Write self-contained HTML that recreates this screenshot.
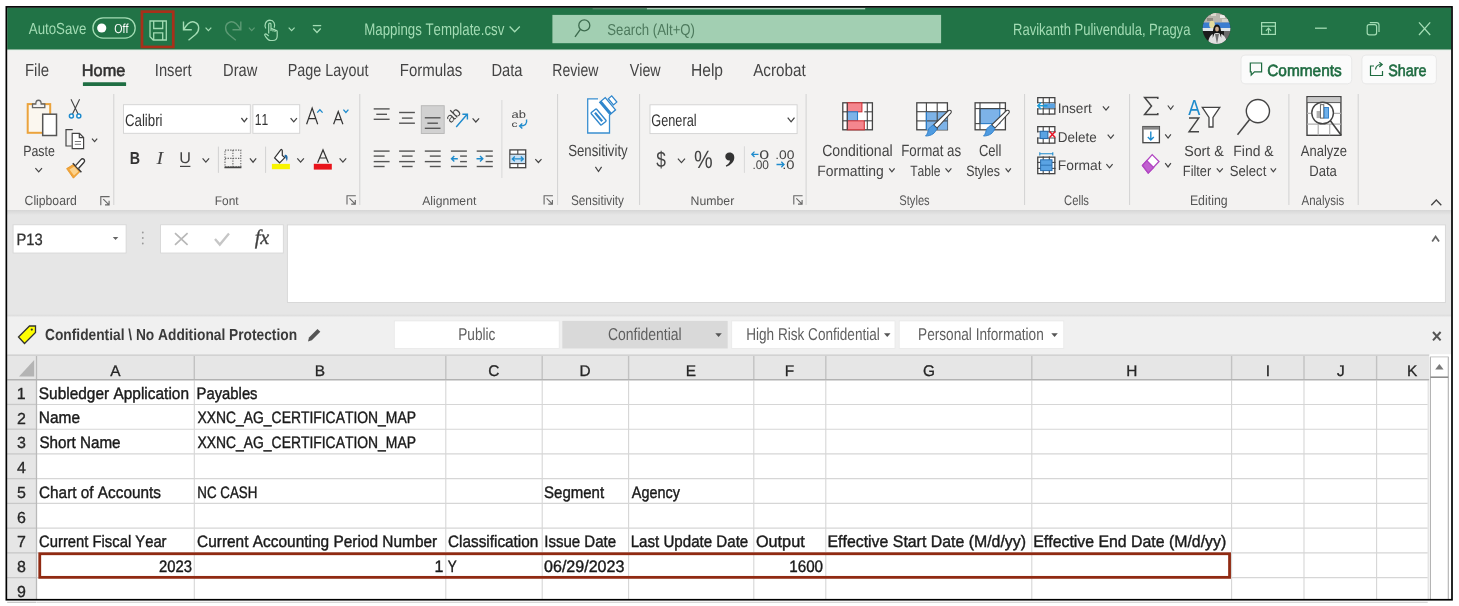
<!DOCTYPE html>
<html><head><meta charset="utf-8"><title>Excel</title>
<style>
*{margin:0;padding:0}
html,body{width:1459px;height:606px;overflow:hidden;background:#fff}
svg{position:absolute;left:0;top:0;display:block;will-change:transform}
text{font-kerning:none;white-space:pre;text-rendering:geometricPrecision}
</style></head><body>
<svg width="1459" height="606" viewBox="0 0 1459 606">
<rect x="7.20" y="7.70" width="1444.10" height="42.10" fill="#217346"/>
<rect x="7.20" y="49.80" width="1444.10" height="160.20" fill="#f3f2f1"/>
<rect x="7.20" y="49.80" width="1444.10" height="0.80" fill="#e3efe7"/>
<rect x="7.20" y="210.00" width="1444.10" height="105.00" fill="#e6e6e6"/>
<defs><linearGradient id="sh" x1="0" y1="0" x2="0" y2="1"><stop offset="0" stop-color="#d6d6d6"/><stop offset="1" stop-color="#e6e6e6"/></linearGradient><linearGradient id="sh2" x1="0" y1="0" x2="0" y2="1"><stop offset="0" stop-color="#d8d8d8"/><stop offset="1" stop-color="#efefef"/></linearGradient></defs>
<rect x="7.20" y="210.00" width="1444.10" height="5.00" fill="url(#sh)"/>
<rect x="7.20" y="317.00" width="1444.10" height="37.20" fill="#f0f0f0"/>
<rect x="7.20" y="314.80" width="1444.10" height="2.40" fill="url(#sh2)"/>
<rect x="592.60" y="8.20" width="54.30" height="1.10" fill="#5f8f73"/>
<rect x="646.90" y="8.20" width="218.30" height="1.10" fill="#d2eadb"/>
<text x="28.77" y="34.10" font-size="15.99" fill="#a3dcb4" textLength="57.62" lengthAdjust="spacingAndGlyphs" font-family='"Liberation Sans",sans-serif'>AutoSave</text>
<rect x="92.9" y="17.8" width="42.3" height="20.3" rx="10.15" fill="none" stroke="#a3dcb4" stroke-width="1.3"/>
<circle cx="101.7" cy="28" r="4.6" fill="#ffffff"/>
<text x="114.30" y="32.60" font-size="13.08" fill="#ffffff" textLength="14.19" lengthAdjust="spacingAndGlyphs" font-family='"Liberation Sans",sans-serif'>Off</text>
<rect x="141.95" y="11.65" width="31.3" height="35.3" fill="none" stroke="#a8301a" stroke-width="2.7"/>
<path d="M150 21 H166.3 V40 H153.2 L150 36.8 Z M153.7 21 V28.5 H162.7 V21 M153.7 40 V32.8 H162.7 V40" stroke="#a3dcb4" fill="none" stroke-width="1.3"/>
<path d="M183.5 21.5 V29.8 H191.8 M183.8 29.6 C187 24 190.5 21 194 22 C200.5 24 199.5 31 195.5 34.5 L188.5 40.2" stroke="#a3dcb4" fill="none" stroke-width="1.4"/>
<path d="M205.6 27.6 L208.4 30.6 L211.3 27.6" stroke="#a3dcb4" fill="none" stroke-width="1.2"/>
<path d="M240.8 21.5 V29.8 H232.5 M240.5 29.6 C237.3 24 233.8 21 230.3 22 C223.8 24 224.8 31 228.8 34.5 L235.8 40.2" stroke="#5c9a74" fill="none" stroke-width="1.4"/>
<path d="M248.9 27.6 L251.7 30.6 L254.6 27.6" stroke="#5c9a74" fill="none" stroke-width="1.2"/>
<path d="M268.7 33.5 V24.2 C268.7 22.8 271 22.8 271 24.2 V31 M271 29.5 C271 28.3 273 28.3 273 29.5 V31.5 M273 30 C273 29 275 29 275 30 V32 M275 31 C275 30 277.2 30 277.2 31.5 V36 C277.2 39 275.5 40.5 272.8 40.5 H270.5 C268.7 40.5 267.2 38.8 265.8 36.8 L264.8 35.3 C264.3 34.3 265.8 33.5 266.6 34.3 L268.7 36" stroke="#a3dcb4" fill="none" stroke-width="1.2"/>
<path d="M265.8 28.5 C264 25.5 265.5 20.3 269.8 20.2 C274 20.3 275.5 24.5 274.2 27.8" stroke="#a3dcb4" fill="none" stroke-width="1.2"/>
<path d="M288.7 27.6 L291.6 30.6 L294.6 27.6" stroke="#a3dcb4" fill="none" stroke-width="1.2"/>
<line x1="312.80" y1="25.60" x2="321.20" y2="25.60" stroke="#a3dcb4" stroke-width="1.3"/>
<path d="M313.3 28.5 L317 32.5 L320.7 28.5" stroke="#a3dcb4" fill="none" stroke-width="1.3"/>
<text x="364.31" y="35.10" font-size="16.86" fill="#a3dcb4" textLength="140.03" lengthAdjust="spacingAndGlyphs" font-family='"Liberation Sans",sans-serif'>Mappings Template.csv</text>
<path d="M509.6 26.5 L514.7 31.8 L519.8 26.5" stroke="#a3dcb4" fill="none" stroke-width="1.3"/>
<rect x="552.40" y="14.90" width="388.70" height="28.30" fill="#a2cfb2"/>
<circle cx="584.3" cy="25.4" r="5.5" fill="none" stroke="#3d6b4e" stroke-width="1.3"/>
<line x1="580.40" y1="29.30" x2="575.00" y2="36.80" stroke="#3d6b4e" stroke-width="1.4"/>
<text x="607.30" y="35.10" font-size="15.84" fill="#4d7a5d" textLength="87.72" lengthAdjust="spacingAndGlyphs" font-family='"Liberation Sans",sans-serif'>Search (Alt+Q)</text>
<text x="1013.03" y="34.80" font-size="16.42" fill="#a3dcb4" textLength="177.37" lengthAdjust="spacingAndGlyphs" font-family='"Liberation Sans",sans-serif'>Ravikanth Pulivendula, Pragya</text>
<rect x="1261.6" y="22.6" width="13.8" height="11.8" fill="none" stroke="#a3dcb4" stroke-width="1.2"/>
<line x1="1261.60" y1="26.20" x2="1275.40" y2="26.20" stroke="#a3dcb4" stroke-width="1.2"/>
<path d="M1268.5 33.8 V28.5 M1265.9 30.8 L1268.5 28.2 L1271.1 30.8" stroke="#a3dcb4" fill="none" stroke-width="1.2"/>
<line x1="1315.00" y1="28.20" x2="1326.80" y2="28.20" stroke="#a3dcb4" stroke-width="1.3"/>
<rect x="1367.2" y="24.6" width="9.4" height="10.2" rx="2" fill="none" stroke="#a3dcb4" stroke-width="1.2"/>
<path d="M1369.8 22.6 H1376.5 C1378 22.6 1379 23.6 1379 25 V32" stroke="#a3dcb4" fill="none" stroke-width="1.2"/>
<path d="M1419 22.4 L1430.2 35 M1430.2 22.4 L1419 35" stroke="#a3dcb4" fill="none" stroke-width="1.3"/>
<text x="24.97" y="76.40" font-size="17.59" fill="#444444" textLength="24.09" lengthAdjust="spacingAndGlyphs" font-family='"Liberation Sans",sans-serif'>File</text>
<text x="81.86" y="76.10" font-size="16.72" fill="#303030" textLength="43.46" lengthAdjust="spacingAndGlyphs" font-family='"Liberation Sans",sans-serif' stroke="#303030" stroke-width="0.55">Home</text>
<rect x="82.90" y="82.20" width="43.20" height="3.90" fill="#1f6e43" rx="0.6"/>
<text x="154.84" y="76.40" font-size="17.59" fill="#444444" textLength="36.76" lengthAdjust="spacingAndGlyphs" font-family='"Liberation Sans",sans-serif'>Insert</text>
<text x="223.10" y="76.40" font-size="17.59" fill="#444444" textLength="34.27" lengthAdjust="spacingAndGlyphs" font-family='"Liberation Sans",sans-serif'>Draw</text>
<text x="287.72" y="76.40" font-size="17.59" fill="#444444" textLength="80.79" lengthAdjust="spacingAndGlyphs" font-family='"Liberation Sans",sans-serif'>Page Layout</text>
<text x="399.77" y="76.40" font-size="17.59" fill="#444444" textLength="62.47" lengthAdjust="spacingAndGlyphs" font-family='"Liberation Sans",sans-serif'>Formulas</text>
<text x="491.39" y="76.40" font-size="17.59" fill="#444444" textLength="31.11" lengthAdjust="spacingAndGlyphs" font-family='"Liberation Sans",sans-serif'>Data</text>
<text x="552.25" y="76.40" font-size="17.59" fill="#444444" textLength="46.12" lengthAdjust="spacingAndGlyphs" font-family='"Liberation Sans",sans-serif'>Review</text>
<text x="629.74" y="76.40" font-size="17.59" fill="#444444" textLength="30.93" lengthAdjust="spacingAndGlyphs" font-family='"Liberation Sans",sans-serif'>View</text>
<text x="690.92" y="76.40" font-size="17.59" fill="#444444" textLength="32.14" lengthAdjust="spacingAndGlyphs" font-family='"Liberation Sans",sans-serif'>Help</text>
<text x="753.17" y="76.40" font-size="17.59" fill="#444444" textLength="52.64" lengthAdjust="spacingAndGlyphs" font-family='"Liberation Sans",sans-serif'>Acrobat</text>
<rect x="1241" y="55.1" width="110.7" height="28.7" rx="4" fill="#fbfbfb" stroke="#e4e4e4" stroke-width="0.8"/>
<rect x="1361.9" y="55.1" width="74.5" height="28.7" rx="4" fill="#fbfbfb" stroke="#e4e4e4" stroke-width="0.8"/>
<path d="M1250.3 63 H1261.6 V71.8 H1254.5 L1251.2 75 V71.8 H1250.3 Z" stroke="#1e6b40" fill="none" stroke-width="1.2"/>
<text x="1267.22" y="76.00" font-size="16.28" fill="#1e6b40" textLength="74.54" lengthAdjust="spacingAndGlyphs" font-family='"Liberation Sans",sans-serif' stroke="#1e6b40" stroke-width="0.6">Comments</text>
<path d="M1375.5 69.5 C1376 65.5 1378.5 64.5 1381.5 64.5 M1379.3 62.2 L1382.2 64.5 L1379.3 67 M1374 66 H1370.5 V75.5 H1382.5 V71" stroke="#1e6b40" fill="none" stroke-width="1.2"/>
<text x="1388.25" y="76.00" font-size="16.28" fill="#1e6b40" textLength="38.29" lengthAdjust="spacingAndGlyphs" font-family='"Liberation Sans",sans-serif' stroke="#1e6b40" stroke-width="0.6">Share</text>
<line x1="113.80" y1="94.00" x2="113.80" y2="205.00" stroke="#d2d2d2" stroke-width="1"/>
<line x1="359.80" y1="94.00" x2="359.80" y2="205.00" stroke="#d2d2d2" stroke-width="1"/>
<line x1="557.60" y1="94.00" x2="557.60" y2="205.00" stroke="#d2d2d2" stroke-width="1"/>
<line x1="639.60" y1="94.00" x2="639.60" y2="205.00" stroke="#d2d2d2" stroke-width="1"/>
<line x1="806.10" y1="94.00" x2="806.10" y2="205.00" stroke="#d2d2d2" stroke-width="1"/>
<line x1="1024.60" y1="94.00" x2="1024.60" y2="205.00" stroke="#d2d2d2" stroke-width="1"/>
<line x1="1129.60" y1="94.00" x2="1129.60" y2="205.00" stroke="#d2d2d2" stroke-width="1"/>
<line x1="1288.90" y1="94.00" x2="1288.90" y2="205.00" stroke="#d2d2d2" stroke-width="1"/>
<line x1="1358.20" y1="94.00" x2="1358.20" y2="205.00" stroke="#d2d2d2" stroke-width="1"/>
<text x="24.58" y="204.60" font-size="13.37" fill="#555555" textLength="52.21" lengthAdjust="spacingAndGlyphs" font-family='"Liberation Sans",sans-serif'>Clipboard</text>
<text x="214.83" y="205.00" font-size="12.50" fill="#555555" textLength="23.76" lengthAdjust="spacingAndGlyphs" font-family='"Liberation Sans",sans-serif'>Font</text>
<text x="422.18" y="205.00" font-size="12.50" fill="#555555" textLength="54.11" lengthAdjust="spacingAndGlyphs" font-family='"Liberation Sans",sans-serif'>Alignment</text>
<text x="570.96" y="205.00" font-size="13.95" fill="#555555" textLength="53.06" lengthAdjust="spacingAndGlyphs" font-family='"Liberation Sans",sans-serif'>Sensitivity</text>
<text x="690.59" y="204.60" font-size="12.50" fill="#555555" textLength="43.71" lengthAdjust="spacingAndGlyphs" font-family='"Liberation Sans",sans-serif'>Number</text>
<text x="899.29" y="205.00" font-size="13.95" fill="#555555" textLength="30.41" lengthAdjust="spacingAndGlyphs" font-family='"Liberation Sans",sans-serif'>Styles</text>
<text x="1064.03" y="205.00" font-size="13.81" fill="#555555" textLength="24.98" lengthAdjust="spacingAndGlyphs" font-family='"Liberation Sans",sans-serif'>Cells</text>
<text x="1189.89" y="205.00" font-size="13.95" fill="#555555" textLength="37.81" lengthAdjust="spacingAndGlyphs" font-family='"Liberation Sans",sans-serif'>Editing</text>
<text x="1301.48" y="205.00" font-size="13.95" fill="#555555" textLength="42.74" lengthAdjust="spacingAndGlyphs" font-family='"Liberation Sans",sans-serif'>Analysis</text>
<rect x="13.1" y="224.8" width="113" height="28.2" fill="#ffffff" stroke="#d4d4d4" stroke-width="0.8"/>
<text x="16.49" y="245.10" font-size="16.42" fill="#333333" textLength="26.15" lengthAdjust="spacingAndGlyphs" font-family='"Liberation Sans",sans-serif' stroke="#333333" stroke-width="0.3">P13</text>
<path d="M112.8 236.9 H118.3 L115.55 240 Z" stroke="none" fill="#666666" stroke-width="1"/>
<circle cx="142.8" cy="232.5" r="0.9" fill="#999999"/>
<circle cx="142.8" cy="238" r="0.9" fill="#999999"/>
<circle cx="142.8" cy="243.5" r="0.9" fill="#999999"/>
<rect x="160.6" y="224.8" width="122.7" height="28.2" fill="#ffffff" stroke="#d4d4d4" stroke-width="0.8"/>
<path d="M175 233.2 L187.6 244.8 M187.6 233.2 L175 244.8" stroke="#b8b8b8" fill="none" stroke-width="1.7"/>
<path d="M215 239 L219.8 244.6 L229 233.5" stroke="#c6c6c6" fill="none" stroke-width="2.3"/>
<text x="254.77" y="244.00" font-size="20.62" fill="#404040" textLength="14.57" lengthAdjust="spacingAndGlyphs" font-family='"Liberation Serif",serif' font-style="italic" stroke="#404040" stroke-width="0.3">fx</text>
<rect x="287.4" y="224.9" width="1158" height="77.6" fill="#ffffff" stroke="#d6d6d6" stroke-width="0.9"/>
<path d="M1432.2 241.5 L1435.6 236.6 L1439 241.5" stroke="#666666" fill="none" stroke-width="1.8"/>
<path d="M18.5 337 L29.5 326 H35.5 V332.5 L24.5 343.5 Z" stroke="#333333" fill="#ffff00" stroke-width="1.3"/>
<circle cx="31.8" cy="329.6" r="1.1" fill="#333333"/>
<text x="45.04" y="339.60" font-size="15.99" fill="#3a3a3a" textLength="252.02" lengthAdjust="spacingAndGlyphs" font-family='"Liberation Sans",sans-serif' font-weight="700">Confidential \ No Additional Protection</text>
<path d="M308 341.5 L309 337.5 L317.5 329 L320.3 331.8 L311.8 340.3 Z" stroke="none" fill="#555555" stroke-width="1"/>
<rect x="394.30" y="320.90" width="164.90" height="27.60" fill="#ffffff" stroke="#e8e8e8" stroke-width="0.8"/>
<text x="458.28" y="340.00" font-size="17.15" fill="#606060" textLength="37.18" lengthAdjust="spacingAndGlyphs" font-family='"Liberation Sans",sans-serif'>Public</text>
<rect x="562.30" y="320.90" width="165.40" height="27.60" fill="#d9d9d9"/>
<text x="607.89" y="340.00" font-size="17.15" fill="#606060" textLength="73.85" lengthAdjust="spacingAndGlyphs" font-family='"Liberation Sans",sans-serif'>Confidential</text>
<path d="M715.3 333.3 H721.8 L718.55 337 Z" stroke="none" fill="#555555" stroke-width="1"/>
<rect x="731.70" y="320.90" width="163.30" height="27.60" fill="#ffffff" stroke="#e8e8e8" stroke-width="0.8"/>
<text x="746.19" y="340.00" font-size="17.15" fill="#606060" textLength="133.62" lengthAdjust="spacingAndGlyphs" font-family='"Liberation Sans",sans-serif'>High Risk Confidential</text>
<path d="M884 333.3 H890.5 L887.25 337 Z" stroke="none" fill="#555555" stroke-width="1"/>
<rect x="899.20" y="320.90" width="164.60" height="27.60" fill="#ffffff" stroke="#e8e8e8" stroke-width="0.8"/>
<text x="918.08" y="340.00" font-size="17.15" fill="#606060" textLength="125.70" lengthAdjust="spacingAndGlyphs" font-family='"Liberation Sans",sans-serif'>Personal Information</text>
<path d="M1051.3 333.3 H1057.8 L1054.55 337 Z" stroke="none" fill="#555555" stroke-width="1"/>
<path d="M1433 332 L1440.6 340.4 M1440.6 332 L1433 340.4" stroke="#555555" fill="none" stroke-width="2"/>
<rect x="7.20" y="355.00" width="1422.30" height="24.70" fill="#e6e6e6"/>
<rect x="7.20" y="355.00" width="29.30" height="244.00" fill="#e6e6e6"/>
<rect x="37.20" y="380.50" width="1390.50" height="218.50" fill="#ffffff"/>
<line x1="7.20" y1="355.10" x2="1429.40" y2="355.10" stroke="#d2d2d2" stroke-width="1.6"/>
<line x1="37.00" y1="404.44" x2="1427.70" y2="404.44" stroke="#d6d6d6" stroke-width="1.1"/>
<line x1="37.00" y1="429.18" x2="1427.70" y2="429.18" stroke="#d6d6d6" stroke-width="1.1"/>
<line x1="37.00" y1="453.92" x2="1427.70" y2="453.92" stroke="#d6d6d6" stroke-width="1.1"/>
<line x1="37.00" y1="478.66" x2="1427.70" y2="478.66" stroke="#d6d6d6" stroke-width="1.1"/>
<line x1="37.00" y1="503.40" x2="1427.70" y2="503.40" stroke="#d6d6d6" stroke-width="1.1"/>
<line x1="37.00" y1="528.14" x2="1427.70" y2="528.14" stroke="#d6d6d6" stroke-width="1.1"/>
<line x1="37.00" y1="552.88" x2="1427.70" y2="552.88" stroke="#d6d6d6" stroke-width="1.1"/>
<line x1="37.00" y1="577.62" x2="1427.70" y2="577.62" stroke="#d6d6d6" stroke-width="1.1"/>
<line x1="37.00" y1="602.36" x2="1427.70" y2="602.36" stroke="#d6d6d6" stroke-width="1.1"/>
<line x1="194.30" y1="380.50" x2="194.30" y2="599.00" stroke="#d6d6d6" stroke-width="1.1"/>
<line x1="445.80" y1="380.50" x2="445.80" y2="599.00" stroke="#d6d6d6" stroke-width="1.1"/>
<line x1="542.20" y1="380.50" x2="542.20" y2="599.00" stroke="#d6d6d6" stroke-width="1.1"/>
<line x1="628.60" y1="380.50" x2="628.60" y2="599.00" stroke="#d6d6d6" stroke-width="1.1"/>
<line x1="753.80" y1="380.50" x2="753.80" y2="599.00" stroke="#d6d6d6" stroke-width="1.1"/>
<line x1="825.80" y1="380.50" x2="825.80" y2="599.00" stroke="#d6d6d6" stroke-width="1.1"/>
<line x1="1031.80" y1="380.50" x2="1031.80" y2="599.00" stroke="#d6d6d6" stroke-width="1.1"/>
<line x1="1231.60" y1="380.50" x2="1231.60" y2="599.00" stroke="#d6d6d6" stroke-width="1.1"/>
<line x1="1304.00" y1="380.50" x2="1304.00" y2="599.00" stroke="#d6d6d6" stroke-width="1.1"/>
<line x1="1376.60" y1="380.50" x2="1376.60" y2="599.00" stroke="#d6d6d6" stroke-width="1.1"/>
<line x1="1428.20" y1="380.50" x2="1428.20" y2="599.00" stroke="#dcdcdc" stroke-width="1.1"/>
<line x1="194.30" y1="356.00" x2="194.30" y2="379.50" stroke="#c2c2c2" stroke-width="1.4"/>
<line x1="445.80" y1="356.00" x2="445.80" y2="379.50" stroke="#c2c2c2" stroke-width="1.4"/>
<line x1="542.20" y1="356.00" x2="542.20" y2="379.50" stroke="#c2c2c2" stroke-width="1.4"/>
<line x1="628.60" y1="356.00" x2="628.60" y2="379.50" stroke="#c2c2c2" stroke-width="1.4"/>
<line x1="753.80" y1="356.00" x2="753.80" y2="379.50" stroke="#c2c2c2" stroke-width="1.4"/>
<line x1="825.80" y1="356.00" x2="825.80" y2="379.50" stroke="#c2c2c2" stroke-width="1.4"/>
<line x1="1031.80" y1="356.00" x2="1031.80" y2="379.50" stroke="#c2c2c2" stroke-width="1.4"/>
<line x1="1231.60" y1="356.00" x2="1231.60" y2="379.50" stroke="#c2c2c2" stroke-width="1.4"/>
<line x1="1304.00" y1="356.00" x2="1304.00" y2="379.50" stroke="#c2c2c2" stroke-width="1.4"/>
<line x1="1376.60" y1="356.00" x2="1376.60" y2="379.50" stroke="#c2c2c2" stroke-width="1.4"/>
<line x1="7.20" y1="404.44" x2="36.50" y2="404.44" stroke="#c8c8c8" stroke-width="1.3"/>
<line x1="7.20" y1="429.18" x2="36.50" y2="429.18" stroke="#c8c8c8" stroke-width="1.3"/>
<line x1="7.20" y1="453.92" x2="36.50" y2="453.92" stroke="#c8c8c8" stroke-width="1.3"/>
<line x1="7.20" y1="478.66" x2="36.50" y2="478.66" stroke="#c8c8c8" stroke-width="1.3"/>
<line x1="7.20" y1="503.40" x2="36.50" y2="503.40" stroke="#c8c8c8" stroke-width="1.3"/>
<line x1="7.20" y1="528.14" x2="36.50" y2="528.14" stroke="#c8c8c8" stroke-width="1.3"/>
<line x1="7.20" y1="552.88" x2="36.50" y2="552.88" stroke="#c8c8c8" stroke-width="1.3"/>
<line x1="7.20" y1="577.62" x2="36.50" y2="577.62" stroke="#c8c8c8" stroke-width="1.3"/>
<line x1="7.20" y1="602.36" x2="36.50" y2="602.36" stroke="#c8c8c8" stroke-width="1.3"/>
<line x1="36.50" y1="356.00" x2="36.50" y2="599.00" stroke="#b9b9b9" stroke-width="1.3"/>
<line x1="7.20" y1="379.75" x2="1429.40" y2="379.75" stroke="#b2b2b2" stroke-width="1.6"/>
<path d="M19 376.5 L34.2 360 V376.5 Z" stroke="none" fill="#b4b4b4" stroke-width="1"/>
<text x="110.26" y="375.60" font-size="15.41" fill="#262626" textLength="10.28" lengthAdjust="spacingAndGlyphs" font-family='"Liberation Sans",sans-serif' stroke="#262626" stroke-width="0.3">A</text>
<text x="314.69" y="375.60" font-size="15.41" fill="#262626" textLength="10.28" lengthAdjust="spacingAndGlyphs" font-family='"Liberation Sans",sans-serif' stroke="#262626" stroke-width="0.3">B</text>
<text x="488.34" y="375.60" font-size="15.41" fill="#262626" textLength="11.13" lengthAdjust="spacingAndGlyphs" font-family='"Liberation Sans",sans-serif' stroke="#262626" stroke-width="0.3">C</text>
<text x="579.57" y="375.60" font-size="15.41" fill="#262626" textLength="11.13" lengthAdjust="spacingAndGlyphs" font-family='"Liberation Sans",sans-serif' stroke="#262626" stroke-width="0.3">D</text>
<text x="685.76" y="375.60" font-size="15.41" fill="#262626" textLength="10.28" lengthAdjust="spacingAndGlyphs" font-family='"Liberation Sans",sans-serif' stroke="#262626" stroke-width="0.3">E</text>
<text x="784.77" y="375.60" font-size="15.41" fill="#262626" textLength="9.41" lengthAdjust="spacingAndGlyphs" font-family='"Liberation Sans",sans-serif' stroke="#262626" stroke-width="0.3">F</text>
<text x="923.00" y="375.60" font-size="15.41" fill="#262626" textLength="11.98" lengthAdjust="spacingAndGlyphs" font-family='"Liberation Sans",sans-serif' stroke="#262626" stroke-width="0.3">G</text>
<text x="1126.13" y="375.60" font-size="15.41" fill="#262626" textLength="11.13" lengthAdjust="spacingAndGlyphs" font-family='"Liberation Sans",sans-serif' stroke="#262626" stroke-width="0.3">H</text>
<text x="1265.66" y="375.60" font-size="15.41" fill="#262626" textLength="4.28" lengthAdjust="spacingAndGlyphs" font-family='"Liberation Sans",sans-serif' stroke="#262626" stroke-width="0.3">I</text>
<text x="1336.90" y="375.60" font-size="15.41" fill="#262626" textLength="7.70" lengthAdjust="spacingAndGlyphs" font-family='"Liberation Sans",sans-serif' stroke="#262626" stroke-width="0.3">J</text>
<text x="1406.92" y="375.60" font-size="15.41" fill="#262626" textLength="10.28" lengthAdjust="spacingAndGlyphs" font-family='"Liberation Sans",sans-serif' stroke="#262626" stroke-width="0.3">K</text>
<text x="16.74" y="398.84" font-size="15.99" fill="#262626" textLength="8.89" lengthAdjust="spacingAndGlyphs" font-family='"Liberation Sans",sans-serif' stroke="#262626" stroke-width="0.3">1</text>
<text x="16.95" y="423.58" font-size="15.99" fill="#262626" textLength="8.89" lengthAdjust="spacingAndGlyphs" font-family='"Liberation Sans",sans-serif' stroke="#262626" stroke-width="0.3">2</text>
<text x="17.00" y="448.32" font-size="15.99" fill="#262626" textLength="8.89" lengthAdjust="spacingAndGlyphs" font-family='"Liberation Sans",sans-serif' stroke="#262626" stroke-width="0.3">3</text>
<text x="17.00" y="473.06" font-size="15.99" fill="#262626" textLength="8.89" lengthAdjust="spacingAndGlyphs" font-family='"Liberation Sans",sans-serif' stroke="#262626" stroke-width="0.3">4</text>
<text x="16.97" y="497.80" font-size="15.99" fill="#262626" textLength="8.89" lengthAdjust="spacingAndGlyphs" font-family='"Liberation Sans",sans-serif' stroke="#262626" stroke-width="0.3">5</text>
<text x="16.90" y="522.54" font-size="15.99" fill="#262626" textLength="8.89" lengthAdjust="spacingAndGlyphs" font-family='"Liberation Sans",sans-serif' stroke="#262626" stroke-width="0.3">6</text>
<text x="16.95" y="547.28" font-size="15.99" fill="#262626" textLength="8.89" lengthAdjust="spacingAndGlyphs" font-family='"Liberation Sans",sans-serif' stroke="#262626" stroke-width="0.3">7</text>
<text x="16.95" y="572.02" font-size="15.99" fill="#262626" textLength="8.89" lengthAdjust="spacingAndGlyphs" font-family='"Liberation Sans",sans-serif' stroke="#262626" stroke-width="0.3">8</text>
<text x="16.96" y="596.76" font-size="15.99" fill="#262626" textLength="8.89" lengthAdjust="spacingAndGlyphs" font-family='"Liberation Sans",sans-serif' stroke="#262626" stroke-width="0.3">9</text>
<rect x="1429.40" y="355.00" width="21.40" height="244.00" fill="#ffffff"/>
<line x1="1430.40" y1="356.70" x2="1430.40" y2="599.00" stroke="#b0b0b0" stroke-width="1.1"/>
<line x1="1448.30" y1="356.70" x2="1448.30" y2="599.00" stroke="#b0b0b0" stroke-width="1.1"/>
<line x1="1430.40" y1="356.90" x2="1448.30" y2="356.90" stroke="#c8c8c8" stroke-width="1"/>
<line x1="1430.40" y1="377.20" x2="1448.30" y2="377.20" stroke="#888888" stroke-width="1.5"/>
<path d="M1435.2 369.4 L1439.4 364.1 L1443.6 369.4 Z" stroke="none" fill="#7a7a7a" stroke-width="1"/>
<text x="38.80" y="398.64" font-size="16.57" fill="#1a1a1a" textLength="150.20" lengthAdjust="spacingAndGlyphs" font-family='"Liberation Sans",sans-serif' stroke="#1a1a1a" stroke-width="0.4">Subledger Application</text>
<text x="196.58" y="398.64" font-size="16.57" fill="#1a1a1a" textLength="60.95" lengthAdjust="spacingAndGlyphs" font-family='"Liberation Sans",sans-serif' stroke="#1a1a1a" stroke-width="0.4">Payables</text>
<text x="38.83" y="423.38" font-size="16.57" fill="#1a1a1a" textLength="41.15" lengthAdjust="spacingAndGlyphs" font-family='"Liberation Sans",sans-serif' stroke="#1a1a1a" stroke-width="0.4">Name</text>
<text x="197.49" y="423.38" font-size="16.57" fill="#1a1a1a" textLength="218.44" lengthAdjust="spacingAndGlyphs" font-family='"Liberation Sans",sans-serif' stroke="#1a1a1a" stroke-width="0.4">XXNC_AG_CERTIFICATION_MAP</text>
<text x="39.41" y="448.12" font-size="16.57" fill="#1a1a1a" textLength="81.17" lengthAdjust="spacingAndGlyphs" font-family='"Liberation Sans",sans-serif' stroke="#1a1a1a" stroke-width="0.4">Short Name</text>
<text x="197.49" y="448.12" font-size="16.57" fill="#1a1a1a" textLength="218.44" lengthAdjust="spacingAndGlyphs" font-family='"Liberation Sans",sans-serif' stroke="#1a1a1a" stroke-width="0.4">XXNC_AG_CERTIFICATION_MAP</text>
<text x="39.02" y="497.60" font-size="16.57" fill="#1a1a1a" textLength="121.93" lengthAdjust="spacingAndGlyphs" font-family='"Liberation Sans",sans-serif' stroke="#1a1a1a" stroke-width="0.4">Chart of Accounts</text>
<text x="197.30" y="497.60" font-size="16.57" fill="#1a1a1a" textLength="60.08" lengthAdjust="spacingAndGlyphs" font-family='"Liberation Sans",sans-serif' stroke="#1a1a1a" stroke-width="0.4">NC CASH</text>
<text x="544.02" y="497.60" font-size="16.57" fill="#1a1a1a" textLength="60.09" lengthAdjust="spacingAndGlyphs" font-family='"Liberation Sans",sans-serif' stroke="#1a1a1a" stroke-width="0.4">Segment</text>
<text x="631.87" y="497.60" font-size="16.57" fill="#1a1a1a" textLength="48.06" lengthAdjust="spacingAndGlyphs" font-family='"Liberation Sans",sans-serif' stroke="#1a1a1a" stroke-width="0.4">Agency</text>
<text x="39.05" y="547.08" font-size="16.57" fill="#1a1a1a" textLength="127.50" lengthAdjust="spacingAndGlyphs" font-family='"Liberation Sans",sans-serif' stroke="#1a1a1a" stroke-width="0.4">Current Fiscal Year</text>
<text x="197.02" y="547.08" font-size="16.57" fill="#1a1a1a" textLength="240.24" lengthAdjust="spacingAndGlyphs" font-family='"Liberation Sans",sans-serif' stroke="#1a1a1a" stroke-width="0.4">Current Accounting Period Number</text>
<text x="448.02" y="547.08" font-size="16.57" fill="#1a1a1a" textLength="90.27" lengthAdjust="spacingAndGlyphs" font-family='"Liberation Sans",sans-serif' stroke="#1a1a1a" stroke-width="0.4">Classification</text>
<text x="544.21" y="547.08" font-size="16.57" fill="#1a1a1a" textLength="71.96" lengthAdjust="spacingAndGlyphs" font-family='"Liberation Sans",sans-serif' stroke="#1a1a1a" stroke-width="0.4">Issue Date</text>
<text x="630.66" y="547.08" font-size="16.57" fill="#1a1a1a" textLength="117.61" lengthAdjust="spacingAndGlyphs" font-family='"Liberation Sans",sans-serif' stroke="#1a1a1a" stroke-width="0.4">Last Update Date</text>
<text x="755.93" y="547.08" font-size="16.57" fill="#1a1a1a" textLength="48.79" lengthAdjust="spacingAndGlyphs" font-family='"Liberation Sans",sans-serif' stroke="#1a1a1a" stroke-width="0.4">Output</text>
<text x="827.50" y="547.08" font-size="16.57" fill="#1a1a1a" textLength="198.49" lengthAdjust="spacingAndGlyphs" font-family='"Liberation Sans",sans-serif' stroke="#1a1a1a" stroke-width="0.4">Effective Start Date (M/d/yy)</text>
<text x="1033.30" y="547.08" font-size="16.57" fill="#1a1a1a" textLength="192.88" lengthAdjust="spacingAndGlyphs" font-family='"Liberation Sans",sans-serif' stroke="#1a1a1a" stroke-width="0.4">Effective End Date (M/d/yy)</text>
<text x="158.95" y="571.82" font-size="16.57" fill="#1a1a1a" textLength="33.00" lengthAdjust="spacingAndGlyphs" font-family='"Liberation Sans",sans-serif' stroke="#1a1a1a" stroke-width="0.4">2023</text>
<text x="434.48" y="571.82" font-size="16.57" fill="#1a1a1a" textLength="8.90" lengthAdjust="spacingAndGlyphs" font-family='"Liberation Sans",sans-serif' stroke="#1a1a1a" stroke-width="0.4">1</text>
<text x="447.80" y="571.82" font-size="16.57" fill="#1a1a1a" textLength="8.99" lengthAdjust="spacingAndGlyphs" font-family='"Liberation Sans",sans-serif' stroke="#1a1a1a" stroke-width="0.4">Y</text>
<text x="544.07" y="571.82" font-size="16.57" fill="#1a1a1a" textLength="80.33" lengthAdjust="spacingAndGlyphs" font-family='"Liberation Sans",sans-serif' stroke="#1a1a1a" stroke-width="0.4">06/29/2023</text>
<text x="789.24" y="571.82" font-size="16.57" fill="#1a1a1a" textLength="33.85" lengthAdjust="spacingAndGlyphs" font-family='"Liberation Sans",sans-serif' stroke="#1a1a1a" stroke-width="0.4">1600</text>
<rect x="39.75" y="553.75" width="1189.8" height="23.6" fill="none" stroke="#902a12" stroke-width="2.8"/>
<rect x="6.35" y="6.9" width="1445.65" height="592.85" fill="none" stroke="#000000" stroke-width="1.7"/>
<rect x="27.7" y="104.1" width="22.5" height="28.7" fill="#fbf7ef" stroke="#eba33c" stroke-width="2"/>
<path d="M32.5 107.6 V104 H35.8 C35.8 99 41.2 99 41.2 104 H44.8 V107.6 Z" stroke="#666666" fill="#f3f2f1" stroke-width="1.3"/>
<rect x="42.7" y="114.2" width="13.8" height="21.3" fill="#ffffff" stroke="#555555" stroke-width="1.5"/>
<text x="23.18" y="155.50" font-size="14.83" fill="#444444" textLength="31.67" lengthAdjust="spacingAndGlyphs" font-family='"Liberation Sans",sans-serif'>Paste</text>
<path d="M35.4 168.2 L38.70 171.8 L42 168.2" stroke="#444444" fill="none" stroke-width="1.2"/>
<path d="M71 99.2 L78.2 114.2 M79.6 99.2 L72.4 114.2" stroke="#444444" fill="none" stroke-width="1.1"/>
<circle cx="71.4" cy="116" r="2" fill="#ffffff" stroke="#1e8bcd" stroke-width="1.5"/>
<circle cx="78.8" cy="116" r="2" fill="#ffffff" stroke="#1e8bcd" stroke-width="1.5"/>
<path d="M72.7 129.6 H66 V146 H71.6" stroke="#444444" fill="none" stroke-width="1.2"/>
<path d="M72.2 133.4 H79.5 L83.6 137.5 V148.6 H72.2 Z M79.3 133.4 V137.7 H83.6" stroke="#444444" fill="#ffffff" stroke-width="1.2"/>
<line x1="74.80" y1="141.50" x2="81.00" y2="141.50" stroke="#777777" stroke-width="1"/>
<line x1="74.80" y1="144.30" x2="81.00" y2="144.30" stroke="#777777" stroke-width="1"/>
<path d="M92 138.7 L94.60 141.7 L97.2 138.7" stroke="#444444" fill="none" stroke-width="1.2"/>
<path d="M66.6 168.6 L73.8 164.2 L80.4 171.2 L73.4 178.2 Z" stroke="#e39424" fill="#f3a53a" stroke-width="0.8"/>
<path d="M69.5 169.5 L74.2 166.6 L78.4 171.4 L74 175.5 Z" stroke="none" fill="#fbd38e" stroke-width="1"/>
<path d="M72.8 163.3 L81.4 172.2" stroke="#3a3a3a" fill="none" stroke-width="1.5"/>
<path d="M75.6 165.6 L80.9 159.6 C82 158.4 83.6 158.6 84.3 159.8 C84.9 160.8 84.6 161.8 83.8 162.6 L78.5 168.5" stroke="#3a3a3a" fill="#ffffff" stroke-width="1.4"/>
<path d="M100.8 205.2 V196.6 H109.6" stroke="#666666" fill="none" stroke-width="1.1"/>
<path d="M103.3 199.1 L109.1 204.9 M109.1 200.79999999999998 V204.9 H105.0" stroke="#666666" fill="none" stroke-width="1.1"/>
<path d="M347 204.4 V195.8 H355.8" stroke="#666666" fill="none" stroke-width="1.1"/>
<path d="M349.5 198.3 L355.3 204.10000000000002 M355.3 200.0 V204.10000000000002 H351.2" stroke="#666666" fill="none" stroke-width="1.1"/>
<path d="M544.1 204.4 V195.8 H552.9" stroke="#666666" fill="none" stroke-width="1.1"/>
<path d="M546.6 198.3 L552.4 204.10000000000002 M552.4 200.0 V204.10000000000002 H548.3000000000001" stroke="#666666" fill="none" stroke-width="1.1"/>
<path d="M793.8 204.4 V195.8 H802.5999999999999" stroke="#666666" fill="none" stroke-width="1.1"/>
<path d="M796.3 198.3 L802.0999999999999 204.10000000000002 M802.0999999999999 200.0 V204.10000000000002 H798.0" stroke="#666666" fill="none" stroke-width="1.1"/>
<rect x="123.5" y="104.7" width="126.8" height="28.6" fill="#ffffff" stroke="#d2d2d2" stroke-width="0.9"/>
<text x="124.92" y="125.50" font-size="16.86" fill="#333333" textLength="37.67" lengthAdjust="spacingAndGlyphs" font-family='"Liberation Sans",sans-serif'>Calibri</text>
<path d="M241.4 118 L244.30 121.8 L247.2 118" stroke="#444444" fill="none" stroke-width="1.3"/>
<rect x="252.9" y="104.7" width="46.8" height="28.6" fill="#ffffff" stroke="#d2d2d2" stroke-width="0.9"/>
<text x="254.68" y="125.30" font-size="15.84" fill="#333333" textLength="13.41" lengthAdjust="spacingAndGlyphs" font-family='"Liberation Sans",sans-serif'>11</text>
<path d="M290.6 118.1 L293.75 121.8 L296.9 118.1" stroke="#444444" fill="none" stroke-width="1.3"/>
<path d="M306.6 124.3 L312.15 108 L317.7 124.3 M308.6 118.6 H315.7" stroke="#333333" fill="none" stroke-width="1.2"/>
<path d="M317.2 112.6 L319.9 109.8 L322.6 112.6" stroke="#1e8bcd" fill="none" stroke-width="1.3"/>
<path d="M333.6 124.3 L338.25 111.6 L342.9 124.3 M335.3 119.6 H341.2" stroke="#333333" fill="none" stroke-width="1.2"/>
<path d="M343.4 109.6 L345.9 112.4 L348.4 109.6" stroke="#1e8bcd" fill="none" stroke-width="1.3"/>
<text x="129.75" y="164.30" font-size="17.44" fill="#333333" textLength="10.30" lengthAdjust="spacingAndGlyphs" font-family='"Liberation Sans",sans-serif' font-weight="700">B</text>
<text x="156.58" y="164.30" font-size="18.33" fill="#444444" textLength="6.73" lengthAdjust="spacingAndGlyphs" font-family='"Liberation Serif",serif' font-style="italic">I</text>
<text x="179.35" y="163.00" font-size="15.55" fill="#444444" textLength="11.70" lengthAdjust="spacingAndGlyphs" font-family='"Liberation Sans",sans-serif'>U</text>
<line x1="180.00" y1="166.40" x2="190.40" y2="166.40" stroke="#444444" stroke-width="1.2"/>
<path d="M202.6 158.4 L205.85 162.2 L209.1 158.4" stroke="#444444" fill="none" stroke-width="1.2"/>
<line x1="218.40" y1="146.60" x2="218.40" y2="172.90" stroke="#d2d2d2" stroke-width="1"/>
<rect x="225" y="150.1" width="15.8" height="16.6" fill="none" stroke="#666666" stroke-width="1.1" stroke-dasharray="1.3 1.3"/>
<line x1="232.90" y1="150.10" x2="232.90" y2="166.70" stroke="#666666" stroke-width="1.1" stroke-dasharray="1.3 1.3"/>
<line x1="225.00" y1="158.40" x2="240.80" y2="158.40" stroke="#666666" stroke-width="1.1" stroke-dasharray="1.3 1.3"/>
<line x1="224.40" y1="167.40" x2="241.40" y2="167.40" stroke="#444444" stroke-width="1.7"/>
<path d="M249.9 158.4 L253.05 162.2 L256.2 158.4" stroke="#444444" fill="none" stroke-width="1.2"/>
<line x1="265.60" y1="146.60" x2="265.60" y2="172.90" stroke="#d2d2d2" stroke-width="1"/>
<path d="M280.9 149.6 L274.6 157.9 L279.6 162.8 L284.8 157.6 L282.3 155.5 V150.8 C282.3 149.8 281.4 149.2 280.9 149.6 Z" stroke="#333333" fill="#ffffff" stroke-width="1.2"/>
<path d="M284.6 155 C286.2 154.2 287.6 155.5 287.6 157.5 C287.6 159 287.2 160.4 286.8 161.4 C286.4 159.5 285.6 157.5 284.6 156.2 Z" stroke="none" fill="#1f6aa8" stroke-width="1"/>
<rect x="271.90" y="163.90" width="18.00" height="5.30" fill="#f8f400"/>
<path d="M297.3 158.4 L300.60 162.2 L303.9 158.4" stroke="#444444" fill="none" stroke-width="1.2"/>
<path d="M317.6 162.7 L323 149.9 L328.4 162.7 M319.6 158 H326.4" stroke="#333333" fill="none" stroke-width="1.2"/>
<rect x="313.80" y="163.80" width="18.00" height="5.80" fill="#e8141b"/>
<path d="M339.6 158.4 L342.90 162.2 L346.2 158.4" stroke="#444444" fill="none" stroke-width="1.2"/>
<line x1="373.70" y1="108.90" x2="389.60" y2="108.90" stroke="#555555" stroke-width="1.4"/>
<line x1="376.30" y1="114.30" x2="387.00" y2="114.30" stroke="#555555" stroke-width="1.4"/>
<line x1="373.70" y1="119.30" x2="389.60" y2="119.30" stroke="#555555" stroke-width="1.4"/>
<line x1="399.10" y1="112.50" x2="414.90" y2="112.50" stroke="#555555" stroke-width="1.4"/>
<line x1="401.90" y1="118.10" x2="412.60" y2="118.10" stroke="#555555" stroke-width="1.4"/>
<line x1="399.10" y1="123.20" x2="414.90" y2="123.20" stroke="#555555" stroke-width="1.4"/>
<rect x="421.3" y="105.7" width="22.9" height="27.8" fill="#d1d1d1" stroke="#b6b6b6" stroke-width="0.9"/>
<line x1="424.80" y1="117.80" x2="440.50" y2="117.80" stroke="#555555" stroke-width="1.4"/>
<line x1="427.40" y1="123.20" x2="437.90" y2="123.20" stroke="#555555" stroke-width="1.4"/>
<line x1="424.80" y1="128.30" x2="440.50" y2="128.30" stroke="#555555" stroke-width="1.4"/>
<text x="447.61" y="118.60" font-size="13.95" fill="#444444" textLength="15.48" lengthAdjust="spacingAndGlyphs" font-family='"Liberation Sans",sans-serif' transform="rotate(-45 455.5 117.5)">ab</text>
<path d="M456.2 127 L467.4 114 M462.4 114.2 H467.4 V119.4" stroke="#1e8bcd" fill="none" stroke-width="1.4"/>
<path d="M472.6 118.4 L475.85 122 L479.1 118.4" stroke="#444444" fill="none" stroke-width="1.2"/>
<line x1="373.70" y1="151.10" x2="389.60" y2="151.10" stroke="#555555" stroke-width="1.4"/>
<line x1="399.10" y1="151.10" x2="414.90" y2="151.10" stroke="#555555" stroke-width="1.4"/>
<line x1="424.80" y1="151.10" x2="440.70" y2="151.10" stroke="#555555" stroke-width="1.4"/>
<line x1="373.70" y1="156.10" x2="384.60" y2="156.10" stroke="#555555" stroke-width="1.4"/>
<line x1="401.90" y1="156.10" x2="412.60" y2="156.10" stroke="#555555" stroke-width="1.4"/>
<line x1="429.80" y1="156.10" x2="440.70" y2="156.10" stroke="#555555" stroke-width="1.4"/>
<line x1="373.70" y1="161.60" x2="389.60" y2="161.60" stroke="#555555" stroke-width="1.4"/>
<line x1="399.10" y1="161.60" x2="414.90" y2="161.60" stroke="#555555" stroke-width="1.4"/>
<line x1="424.80" y1="161.60" x2="440.70" y2="161.60" stroke="#555555" stroke-width="1.4"/>
<line x1="373.70" y1="166.50" x2="384.60" y2="166.50" stroke="#555555" stroke-width="1.4"/>
<line x1="401.90" y1="166.50" x2="412.60" y2="166.50" stroke="#555555" stroke-width="1.4"/>
<line x1="429.80" y1="166.50" x2="440.70" y2="166.50" stroke="#555555" stroke-width="1.4"/>
<line x1="450.90" y1="151.10" x2="466.90" y2="151.10" stroke="#555555" stroke-width="1.4"/>
<line x1="476.70" y1="151.10" x2="492.80" y2="151.10" stroke="#555555" stroke-width="1.4"/>
<line x1="460.10" y1="156.10" x2="466.90" y2="156.10" stroke="#555555" stroke-width="1.4"/>
<line x1="485.60" y1="156.10" x2="492.80" y2="156.10" stroke="#555555" stroke-width="1.4"/>
<line x1="460.10" y1="161.60" x2="466.90" y2="161.60" stroke="#555555" stroke-width="1.4"/>
<line x1="485.60" y1="161.60" x2="492.80" y2="161.60" stroke="#555555" stroke-width="1.4"/>
<line x1="450.90" y1="166.50" x2="466.90" y2="166.50" stroke="#555555" stroke-width="1.4"/>
<line x1="476.70" y1="166.50" x2="492.80" y2="166.50" stroke="#555555" stroke-width="1.4"/>
<path d="M451.5 158.8 H457.8 M454.3 156 L451.5 158.8 L454.3 161.6" stroke="#1e8bcd" fill="none" stroke-width="1.4"/>
<path d="M476.5 158.8 H482.8 M480 156 L482.8 158.8 L480 161.6" stroke="#1e8bcd" fill="none" stroke-width="1.4"/>
<line x1="501.90" y1="100.00" x2="501.90" y2="178.00" stroke="#d8d8d8" stroke-width="1"/>
<text x="511.55" y="118.00" font-size="10.90" fill="#444444" textLength="14.39" lengthAdjust="spacingAndGlyphs" font-family='"Liberation Sans",sans-serif'>ab</text>
<text x="511.59" y="127.40" font-size="8.58" fill="#444444" textLength="6.03" lengthAdjust="spacingAndGlyphs" font-family='"Liberation Sans",sans-serif'>c</text>
<path d="M526.5 119.5 C527.5 124 525 126 520 126 M522.3 123.4 L519.6 126 L522.3 128.6" stroke="#1e8bcd" fill="none" stroke-width="1.4"/>
<rect x="509.9" y="149.9" width="15.8" height="17.8" fill="#ffffff" stroke="#444444" stroke-width="1.3"/>
<rect x="510.60" y="154.20" width="14.40" height="9.40" fill="#c9e1f5"/>
<line x1="509.90" y1="154.20" x2="525.70" y2="154.20" stroke="#444444" stroke-width="1.1"/>
<line x1="509.90" y1="163.60" x2="525.70" y2="163.60" stroke="#444444" stroke-width="1.1"/>
<line x1="517.80" y1="149.90" x2="517.80" y2="154.20" stroke="#444444" stroke-width="1.1"/>
<line x1="517.80" y1="163.60" x2="517.80" y2="167.70" stroke="#444444" stroke-width="1.1"/>
<path d="M512.3 158.9 H523.3 M514.8 156.6 L512.3 158.9 L514.8 161.2 M520.8 156.6 L523.3 158.9 L520.8 161.2" stroke="#1e8bcd" fill="none" stroke-width="1.3"/>
<path d="M535.3 159.2 L538.40 162.5 L541.5 159.2" stroke="#444444" fill="none" stroke-width="1.2"/>
<path d="M598 98.9 H587.7 V133 H609.5 V115" stroke="#3a8fd0" fill="#ffffff" stroke-width="1.3"/>
<g transform="rotate(50 598.6 117.0)"><rect x="590.6" y="113.5" width="16" height="7" rx="0.8" fill="#ffffff" stroke="#2f86cc" stroke-width="1.3"/><rect x="593" y="115.9" width="11.2" height="2.2" fill="#2f86cc"/></g>
<g transform="rotate(50 607.6 106.1)"><rect x="599.6" y="102.5" width="16" height="7.2" fill="#ffffff" stroke="#2f86cc" stroke-width="1.3"/><rect x="599.6" y="107.3" width="16" height="2.4" fill="#2f86cc"/></g>
<g transform="rotate(50 612.6 100.4)"><rect x="608.6" y="98.2" width="8" height="4.4" fill="#ffffff" stroke="#2f86cc" stroke-width="1.2"/></g>
<text x="568.20" y="155.50" font-size="16.28" fill="#444444" textLength="59.53" lengthAdjust="spacingAndGlyphs" font-family='"Liberation Sans",sans-serif'>Sensitivity</text>
<path d="M595.4 166.8 L598.50 171.5 L601.6 166.8" stroke="#444444" fill="none" stroke-width="1.2"/>
<rect x="650" y="104.8" width="147.1" height="28.8" fill="#ffffff" stroke="#d2d2d2" stroke-width="0.9"/>
<text x="651.26" y="125.80" font-size="16.86" fill="#333333" textLength="45.29" lengthAdjust="spacingAndGlyphs" font-family='"Liberation Sans",sans-serif'>General</text>
<path d="M787.7 117.7 L791.10 121.8 L794.5 117.7" stroke="#444444" fill="none" stroke-width="1.3"/>
<text x="656.21" y="166.60" font-size="22.09" fill="#444444" textLength="9.67" lengthAdjust="spacingAndGlyphs" font-family='"Liberation Sans",sans-serif'>$</text>
<path d="M677.9 158.6 L681.45 162.7 L685 158.6" stroke="#444444" fill="none" stroke-width="1.2"/>
<text x="694.05" y="167.60" font-size="25.00" fill="#444444" textLength="18.70" lengthAdjust="spacingAndGlyphs" font-family='"Liberation Sans",sans-serif'>%</text>
<path d="M729.5 152.6 C733 152.6 734.3 155 734.3 157.5 C734.3 161.5 731 165 726.3 166.8 L725.8 165.5 C728.3 164.3 729.8 162.6 730 160.5 C727 160.8 725.3 158.8 725.3 156.5 C725.3 154.3 727 152.6 729.5 152.6 Z" stroke="none" fill="#333333" stroke-width="1"/>
<line x1="744.40" y1="146.30" x2="744.40" y2="172.90" stroke="#d8d8d8" stroke-width="1"/>
<path d="M751.8 154.3 H758.5 M754.5 151.6 L751.8 154.3 L754.5 157" stroke="#1e8bcd" fill="none" stroke-width="1.3"/>
<text x="759.31" y="159.00" font-size="12.50" fill="#444444" textLength="9.89" lengthAdjust="spacingAndGlyphs" font-family='"Liberation Sans",sans-serif'>0</text>
<text x="752.41" y="168.80" font-size="12.50" fill="#444444" textLength="16.55" lengthAdjust="spacingAndGlyphs" font-family='"Liberation Sans",sans-serif'>.00</text>
<text x="775.24" y="159.00" font-size="12.50" fill="#444444" textLength="19.20" lengthAdjust="spacingAndGlyphs" font-family='"Liberation Sans",sans-serif'>.00</text>
<path d="M776.5 164.5 H784 M781.3 161.8 L784 164.5 L781.3 167.2" stroke="#1e8bcd" fill="none" stroke-width="1.3"/>
<text x="782.15" y="168.80" font-size="12.50" fill="#444444" textLength="12.33" lengthAdjust="spacingAndGlyphs" font-family='"Liberation Sans",sans-serif'>.0</text>
<rect x="842.8" y="102.8" width="29.6" height="27" fill="#ffffff" stroke="#444444" stroke-width="1.3"/>
<rect x="847.30" y="102.80" width="14.60" height="9.00" fill="#f4868e" stroke="#d13438" stroke-width="1.1"/>
<rect x="847.30" y="111.80" width="10.20" height="9.00" fill="#7db3e8" stroke="#2a7cc7" stroke-width="1.1"/>
<rect x="847.30" y="120.80" width="17.00" height="9.00" fill="#f4868e" stroke="#d13438" stroke-width="1.1"/>
<line x1="847.30" y1="102.80" x2="847.30" y2="129.80" stroke="#444444" stroke-width="1.1"/>
<line x1="867.30" y1="102.80" x2="867.30" y2="129.80" stroke="#444444" stroke-width="1.1"/>
<line x1="842.80" y1="111.80" x2="847.30" y2="111.80" stroke="#444444" stroke-width="1.1"/>
<line x1="864.30" y1="111.80" x2="872.40" y2="111.80" stroke="#444444" stroke-width="1.1"/>
<line x1="842.80" y1="120.80" x2="847.30" y2="120.80" stroke="#444444" stroke-width="1.1"/>
<line x1="864.30" y1="120.80" x2="872.40" y2="120.80" stroke="#444444" stroke-width="1.1"/>
<text x="822.18" y="155.50" font-size="16.28" fill="#444444" textLength="70.46" lengthAdjust="spacingAndGlyphs" font-family='"Liberation Sans",sans-serif'>Conditional</text>
<text x="817.26" y="175.60" font-size="14.97" fill="#444444" textLength="66.54" lengthAdjust="spacingAndGlyphs" font-family='"Liberation Sans",sans-serif'>Formatting</text>
<path d="M889.2 168.3 L891.90 171.8 L894.6 168.3" stroke="#444444" fill="none" stroke-width="1.2"/>
<rect x="916.8" y="102.8" width="30.6" height="27" fill="#ffffff" stroke="#444444" stroke-width="1.3"/>
<rect x="926.40" y="111.70" width="21.00" height="18.10" fill="#7db3e8"/>
<line x1="926.40" y1="102.80" x2="926.40" y2="129.80" stroke="#444444" stroke-width="1.1"/>
<line x1="937.20" y1="102.80" x2="937.20" y2="129.80" stroke="#444444" stroke-width="1.1"/>
<line x1="916.80" y1="111.70" x2="947.40" y2="111.70" stroke="#444444" stroke-width="1.1"/>
<line x1="916.80" y1="120.90" x2="947.40" y2="120.90" stroke="#444444" stroke-width="1.1"/>
<line x1="926.40" y1="111.70" x2="926.40" y2="129.80" stroke="#2a7cc7" stroke-width="1.2"/>
<path d="M948.5 110.5 C951.5 109.5 952 112 950.5 113.5 L937 128 L933.5 125 Z" stroke="#444444" fill="#ffffff" stroke-width="1.1"/>
<path d="M933.2 125.2 L936.8 128.5 C935.5 133 931.5 136 925.5 136 C928 134 927.5 131 929 128.5 C930 127 931.5 126 933.2 125.2 Z" stroke="#2a7cc7" fill="#4f9be0" stroke-width="0.9"/>
<text x="901.21" y="155.50" font-size="16.28" fill="#444444" textLength="59.87" lengthAdjust="spacingAndGlyphs" font-family='"Liberation Sans",sans-serif'>Format as</text>
<text x="910.23" y="175.60" font-size="14.97" fill="#444444" textLength="30.31" lengthAdjust="spacingAndGlyphs" font-family='"Liberation Sans",sans-serif'>Table</text>
<path d="M945.5 168.3 L948.45 171.8 L951.4 168.3" stroke="#444444" fill="none" stroke-width="1.2"/>
<rect x="975.1" y="102.8" width="30.3" height="27" fill="#ffffff" stroke="#444444" stroke-width="1.3"/>
<rect x="980.00" y="108.60" width="19.80" height="15.00" fill="#7db3e8" stroke="#2a7cc7" stroke-width="1.1"/>
<line x1="975.10" y1="108.60" x2="1005.40" y2="108.60" stroke="#444444" stroke-width="1.1"/>
<line x1="975.10" y1="123.60" x2="980.00" y2="123.60" stroke="#444444" stroke-width="1.1"/>
<line x1="980.00" y1="102.80" x2="980.00" y2="129.80" stroke="#444444" stroke-width="1.1"/>
<line x1="999.80" y1="102.80" x2="999.80" y2="108.60" stroke="#444444" stroke-width="1.1"/>
<path d="M1006.5 110.5 C1009.5 109.5 1010 112 1008.5 113.5 L995 128 L991.5 125 Z" stroke="#444444" fill="#ffffff" stroke-width="1.1"/>
<path d="M991.2 125.2 L994.8 128.5 C993.5 133 989.5 136 983.5 136 C986 134 985.5 131 987 128.5 C988 127 989.5 126 991.2 125.2 Z" stroke="#2a7cc7" fill="#4f9be0" stroke-width="0.9"/>
<text x="978.94" y="155.50" font-size="16.28" fill="#444444" textLength="22.43" lengthAdjust="spacingAndGlyphs" font-family='"Liberation Sans",sans-serif'>Cell</text>
<text x="966.14" y="175.60" font-size="14.97" fill="#444444" textLength="33.81" lengthAdjust="spacingAndGlyphs" font-family='"Liberation Sans",sans-serif'>Styles</text>
<path d="M1005.6 168.3 L1008.25 171.8 L1010.9 168.3" stroke="#444444" fill="none" stroke-width="1.2"/>
<rect x="1037.75" y="97.65" width="17.10" height="16.40" fill="#ffffff" stroke="#444444" stroke-width="1.3"/>
<line x1="1043.20" y1="97.00" x2="1043.20" y2="114.70" stroke="#444444" stroke-width="1.1"/>
<line x1="1049.30" y1="97.00" x2="1049.30" y2="114.70" stroke="#444444" stroke-width="1.1"/>
<line x1="1037.10" y1="102.80" x2="1055.50" y2="102.80" stroke="#444444" stroke-width="1.1"/>
<line x1="1037.10" y1="108.80" x2="1055.50" y2="108.80" stroke="#444444" stroke-width="1.1"/>
<rect x="1043.80" y="103.40" width="11.00" height="4.80" fill="#5aa3e3"/>
<rect x="1036.40" y="103.40" width="6.20" height="4.80" fill="#ffffff"/>
<path d="M1037.8 105.8 H1047.5 M1041 102.6 L1037.8 105.8 L1041 109" stroke="#1a9ad6" fill="none" stroke-width="1.5"/>
<text x="1057.64" y="113.00" font-size="13.95" fill="#444444" textLength="34.16" lengthAdjust="spacingAndGlyphs" font-family='"Liberation Sans",sans-serif'>Insert</text>
<path d="M1102.9 106.4 L1106.00 110.1 L1109.1 106.4" stroke="#444444" fill="none" stroke-width="1.2"/>
<rect x="1037.75" y="126.65" width="17.10" height="16.50" fill="#ffffff" stroke="#444444" stroke-width="1.3"/>
<line x1="1043.20" y1="126.00" x2="1043.20" y2="143.80" stroke="#444444" stroke-width="1.1"/>
<line x1="1049.30" y1="126.00" x2="1049.30" y2="143.80" stroke="#444444" stroke-width="1.1"/>
<line x1="1037.10" y1="131.90" x2="1055.50" y2="131.90" stroke="#444444" stroke-width="1.1"/>
<line x1="1037.10" y1="137.90" x2="1055.50" y2="137.90" stroke="#444444" stroke-width="1.1"/>
<rect x="1036.40" y="132.50" width="19.80" height="4.80" fill="#f3f2f1"/>
<rect x="1040.20" y="131.30" width="7.60" height="7.20" fill="#5aa3e3" stroke="#2a6fb0" stroke-width="1.1"/>
<path d="M1049.6 131.6 L1055.2 137.6 M1055.2 131.6 L1049.6 137.6" stroke="#e81123" fill="none" stroke-width="1.4"/>
<text x="1057.79" y="141.70" font-size="14.10" fill="#444444" textLength="39.01" lengthAdjust="spacingAndGlyphs" font-family='"Liberation Sans",sans-serif'>Delete</text>
<path d="M1107.7 134.7 L1110.75 138.4 L1113.8 134.7" stroke="#444444" fill="none" stroke-width="1.2"/>
<rect x="1037.75" y="157.15" width="17.10" height="16.50" fill="#ffffff" stroke="#444444" stroke-width="1.3"/>
<line x1="1043.20" y1="156.50" x2="1043.20" y2="174.30" stroke="#444444" stroke-width="1.1"/>
<line x1="1049.30" y1="156.50" x2="1049.30" y2="174.30" stroke="#444444" stroke-width="1.1"/>
<line x1="1037.10" y1="162.40" x2="1055.50" y2="162.40" stroke="#444444" stroke-width="1.1"/>
<line x1="1037.10" y1="168.40" x2="1055.50" y2="168.40" stroke="#444444" stroke-width="1.1"/>
<rect x="1040.60" y="159.80" width="11.40" height="10.80" fill="#5aa3e3" stroke="#2a6fb0" stroke-width="1"/>
<line x1="1040.60" y1="165.20" x2="1052.00" y2="165.20" stroke="#2a6fb0" stroke-width="0.9"/>
<path d="M1039.8 153.8 H1052.8 M1039.8 152.2 V155.4 M1052.8 152.2 V155.4" stroke="#1e8bcd" fill="none" stroke-width="1.1"/>
<text x="1057.76" y="170.30" font-size="13.95" fill="#444444" textLength="43.84" lengthAdjust="spacingAndGlyphs" font-family='"Liberation Sans",sans-serif'>Format</text>
<path d="M1106.4 164.2 L1109.50 167.9 L1112.6 164.2" stroke="#444444" fill="none" stroke-width="1.2"/>
<path d="M1157.8 99 V97.6 H1144.6 L1151.5 106 L1144.6 114.4 H1157.8 V113" stroke="#444444" fill="none" stroke-width="1.5"/>
<path d="M1167.8 105.5 L1170.65 109.3 L1173.5 105.5" stroke="#444444" fill="none" stroke-width="1.2"/>
<rect x="1142.9" y="126.6" width="16.5" height="16.1" fill="#ffffff" stroke="#444444" stroke-width="1.3"/>
<rect x="1142.90" y="126.60" width="16.50" height="3.00" fill="#888888"/>
<path d="M1150.8 131.5 V140 M1147.8 137 L1150.8 140 L1153.8 137" stroke="#1e8bcd" fill="none" stroke-width="1.4"/>
<path d="M1165.2 134.3 L1168.05 138.1 L1170.9 134.3" stroke="#444444" fill="none" stroke-width="1.2"/>
<path d="M1142.5 165.5 L1152.2 154.6 L1159 161.5 L1148.2 173 Z" stroke="#b146c2" fill="#ffffff" stroke-width="1.3"/>
<path d="M1142.5 165.5 L1146.8 160.6 L1153.6 167.6 L1148.2 173 Z" stroke="#b146c2" fill="#c160d0" stroke-width="1.3"/>
<path d="M1165.2 163.2 L1168.05 166.9 L1170.9 163.2" stroke="#444444" fill="none" stroke-width="1.2"/>
<text x="1188.36" y="114.70" font-size="21.66" fill="#1e8bcd" textLength="12.07" lengthAdjust="spacingAndGlyphs" font-family='"Liberation Sans",sans-serif'>A</text>
<path d="M1189 118 H1198.8 L1189 131.8 H1199" stroke="#444444" fill="none" stroke-width="1.4"/>
<path d="M1202.3 107.4 H1219.8 L1213 117.5 V127 H1209 V117.5 Z" stroke="#444444" fill="#ffffff" stroke-width="1.3"/>
<text x="1184.15" y="155.50" font-size="14.83" fill="#444444" textLength="39.67" lengthAdjust="spacingAndGlyphs" font-family='"Liberation Sans",sans-serif'>Sort &amp;</text>
<text x="1182.85" y="175.60" font-size="14.83" fill="#444444" textLength="28.36" lengthAdjust="spacingAndGlyphs" font-family='"Liberation Sans",sans-serif'>Filter</text>
<path d="M1216.8 168.3 L1219.80 171.8 L1222.8 168.3" stroke="#444444" fill="none" stroke-width="1.2"/>
<circle cx="1257.9" cy="111.1" r="11.6" fill="#ffffff" stroke="#444444" stroke-width="1.4"/>
<line x1="1249.60" y1="119.50" x2="1237.50" y2="134.80" stroke="#444444" stroke-width="1.5"/>
<text x="1233.36" y="155.50" font-size="14.83" fill="#444444" textLength="40.26" lengthAdjust="spacingAndGlyphs" font-family='"Liberation Sans",sans-serif'>Find &amp;</text>
<text x="1229.80" y="175.60" font-size="14.83" fill="#444444" textLength="36.49" lengthAdjust="spacingAndGlyphs" font-family='"Liberation Sans",sans-serif'>Select</text>
<path d="M1270.7 168.3 L1273.35 171.8 L1276 168.3" stroke="#444444" fill="none" stroke-width="1.2"/>
<rect x="1307" y="96.7" width="33.9" height="38.6" fill="#ffffff" stroke="#444444" stroke-width="1.4"/>
<rect x="1307.70" y="97.40" width="32.50" height="5.00" fill="#c8c8c8"/>
<line x1="1307.00" y1="102.60" x2="1341.00" y2="102.60" stroke="#555555" stroke-width="1"/>
<line x1="1307.00" y1="113.40" x2="1341.00" y2="113.40" stroke="#b0b0b0" stroke-width="1.2"/>
<line x1="1307.00" y1="124.10" x2="1341.00" y2="124.10" stroke="#b0b0b0" stroke-width="1.2"/>
<line x1="1318.20" y1="124.10" x2="1318.20" y2="135.30" stroke="#b0b0b0" stroke-width="1.2"/>
<line x1="1329.70" y1="124.10" x2="1329.70" y2="135.30" stroke="#b0b0b0" stroke-width="1.2"/>
<circle cx="1322.6" cy="113" r="10.8" fill="#ffffff" stroke="#444444" stroke-width="1.4"/>
<line x1="1330.40" y1="120.80" x2="1341.20" y2="135.20" stroke="#444444" stroke-width="1.6"/>
<rect x="1316.60" y="111.00" width="3.60" height="7.10" fill="#b0b0b0"/>
<rect x="1320.40" y="104.70" width="3.40" height="13.40" fill="#ffffff" stroke="#555555" stroke-width="0.9"/>
<rect x="1324.20" y="107.50" width="4.30" height="10.60" fill="#6fb0ea" stroke="#2a7cc7" stroke-width="0.9"/>
<text x="1300.87" y="155.50" font-size="15.41" fill="#444444" textLength="46.20" lengthAdjust="spacingAndGlyphs" font-family='"Liberation Sans",sans-serif'>Analyze</text>
<text x="1309.23" y="175.60" font-size="14.97" fill="#444444" textLength="27.67" lengthAdjust="spacingAndGlyphs" font-family='"Liberation Sans",sans-serif'>Data</text>
<path d="M1431.3 205.3 L1436.3 200 L1441.3 205.3" stroke="#444444" fill="none" stroke-width="1.3"/>
<defs><clipPath id="av"><ellipse cx="1216.5" cy="28.5" rx="13.9" ry="15.4"/></clipPath></defs>
<g clip-path="url(#av)"><rect x="1200" y="12" width="34" height="34" fill="#1c1c1c"/><rect x="1200" y="12" width="34" height="11" fill="#b9b6ac"/><rect x="1203" y="14" width="4" height="3" fill="#e8e6de"/><rect x="1211" y="13" width="5" height="3" fill="#dcd8cc"/><rect x="1220" y="15" width="5" height="3" fill="#ecebe6"/><rect x="1207" y="18" width="6" height="3" fill="#8f8a80"/><rect x="1222" y="19" width="6" height="3" fill="#d6d3ca"/><rect x="1200" y="22.5" width="34" height="5.5" fill="#3b7dd0"/><rect x="1200" y="28" width="34" height="3" fill="#dfe6ea"/><rect x="1224" y="31" width="10" height="8" fill="#6a6a6a"/><ellipse cx="1212" cy="24.5" rx="2.8" ry="3.8" fill="#e4dc9c"/><path d="M1208 46 C1208 37 1211 33 1217 33 C1223 33 1227 37 1227 46 Z" fill="#e0e0e0"/><path d="M1212.8 38 C1212.5 30 1213.5 24.5 1217 24.5 C1220.5 24.5 1221.5 30 1221.2 38 L1219.5 33 L1214.5 33 Z" fill="#151515"/><ellipse cx="1217" cy="29" rx="1.9" ry="2.6" fill="#c9a98c"/><path d="M1215 34 L1217 44 L1219 34 Z" fill="#707070"/></g>
</svg>
</body></html>
